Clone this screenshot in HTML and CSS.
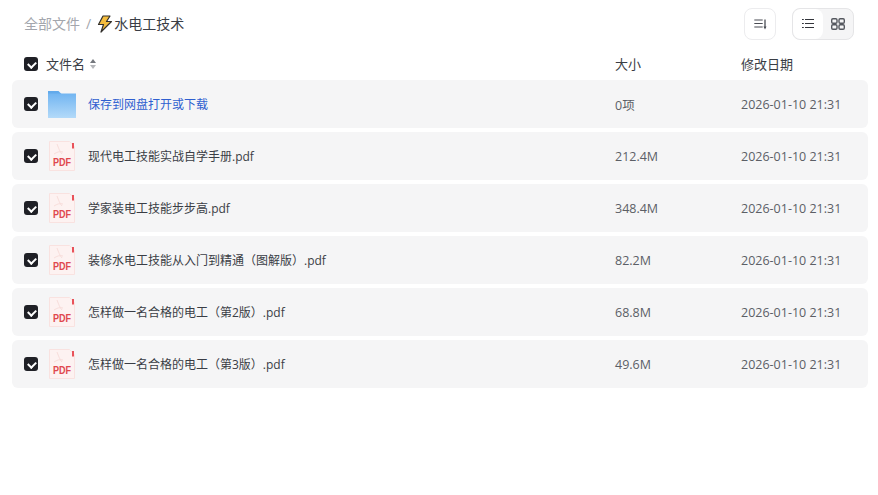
FILE: index.html
```html
<!DOCTYPE html>
<html lang="zh-CN">
<head>
  <meta charset="UTF-8">
  <title>水电工技术</title>
  <link rel="stylesheet" href="styles.css">
</head>
<body>
  <svg class="defs" width="0" height="0">
    <symbol id="pdf" viewBox="0 0 26 32">
      <path d="M.5 1.500h20l5 5v24H.5z" fill="#fdf2f1" stroke="#f9e2e0"/>
      <path d="M23 3h2v5.500h-2z" fill="#e8525a"/>
      <path d="M8 4c1.500 4 3 8 5 10M5 14c3-2 6-3 9-2" fill="none" stroke="#f8dedb"/>
    </symbol>
  </svg>
  <header class="topbar">
    <nav class="crumbs">
      <span class="crumb-root">全部文件</span>
      <span class="crumb-sep">/</span>
      <svg class="bolt" width="18" height="18" viewBox="0 0 18 18">
        <path d="M7 1h7l-3.500 5.500h5L5 17l2.500-7.500h-5z" fill="#f5bd3d" stroke="#33302c" stroke-width="1.200" stroke-linejoin="round"/>
      </svg>
      <span class="crumb-current">水电工技术</span>
    </nav>
    <div class="tools">
      <button class="tool-btn">
        <svg width="16" height="16" viewBox="0 0 16 16" fill="none" stroke="#4a4d54" stroke-width="1.100">
          <path d="M2.300 4h8.400M2.300 7.500h8.400M2.300 11h8.400"/>
          <path d="M13 3.500v8.500" stroke-width="1.300"/>
          <path d="M11.500 10.500h3L13 13.500z" fill="#4a4d54" stroke="none"/>
        </svg>
      </button>
      <div class="view-switch">
        <button class="view-btn active">
          <svg width="16" height="16" viewBox="0 0 16 16" fill="none" stroke="#33353b" stroke-width="1.100">
            <path d="M5 3.500h9M5 7.500h9M5 11.500h9M2 3.500h1.800M2 7.500h1.800M2 11.500h1.800"/>
          </svg>
        </button>
        <button class="view-btn">
          <svg width="16" height="16" viewBox="0 0 16 16" fill="none" stroke="#55585f" stroke-width="1.400">
            <rect x="1.700" y="2.700" width="5.300" height="4.600" rx="1.200"/>
            <rect x="9" y="2.700" width="5.300" height="4.600" rx="1.200"/>
            <rect x="1.700" y="8.700" width="5.300" height="4.600" rx="1.200"/>
            <rect x="9" y="8.700" width="5.300" height="4.600" rx="1.200"/>
          </svg>
        </button>
      </div>
    </div>
  </header>

  <div class="table-head">
    <span class="check"></span>
    <span class="head-name">文件名<i class="sort-arrows"></i></span>
    <span class="col-size">大小</span>
    <span class="col-date">修改日期</span>
  </div>

  <main class="rows">
    <div class="row">
      <span class="check"></span>
      <svg class="file-icon" width="32" height="32" viewBox="0 0 32 32">
        <defs>
          <linearGradient id="folder" x1="0" y1="0" x2="0" y2="1">
            <stop offset="0" stop-color="#72b5f1"/>
            <stop offset="1" stop-color="#b3daf9"/>
          </linearGradient>
        </defs>
        <path d="M2 3h10.500l3 3H2z" fill="#62aaeb"/>
        <path d="M2 5.500h28V30H2z" fill="url(#folder)"/>
      </svg>
      <span class="name link">保存到网盘打开或下载</span>
      <span class="col-size num">0项</span>
      <span class="col-date num">2026-01-10 21:31</span>
    </div>
    <div class="row">
      <span class="check"></span>
      <span class="pdf-icon"><svg width="26" height="32"><use href="#pdf"/></svg><b>PDF</b></span>
      <span class="name">现代电工技能实战自学手册.pdf</span>
      <span class="col-size num">212.4M</span>
      <span class="col-date num">2026-01-10 21:31</span>
    </div>
    <div class="row">
      <span class="check"></span>
      <span class="pdf-icon"><svg width="26" height="32"><use href="#pdf"/></svg><b>PDF</b></span>
      <span class="name">学家装电工技能步步高.pdf</span>
      <span class="col-size num">348.4M</span>
      <span class="col-date num">2026-01-10 21:31</span>
    </div>
    <div class="row">
      <span class="check"></span>
      <span class="pdf-icon"><svg width="26" height="32"><use href="#pdf"/></svg><b>PDF</b></span>
      <span class="name">装修水电工技能从入门到精通（图解版）.pdf</span>
      <span class="col-size num">82.2M</span>
      <span class="col-date num">2026-01-10 21:31</span>
    </div>
    <div class="row">
      <span class="check"></span>
      <span class="pdf-icon"><svg width="26" height="32"><use href="#pdf"/></svg><b>PDF</b></span>
      <span class="name">怎样做一名合格的电工（第2版）.pdf</span>
      <span class="col-size num">68.8M</span>
      <span class="col-date num">2026-01-10 21:31</span>
    </div>
    <div class="row">
      <span class="check"></span>
      <span class="pdf-icon"><svg width="26" height="32"><use href="#pdf"/></svg><b>PDF</b></span>
      <span class="name">怎样做一名合格的电工（第3版）.pdf</span>
      <span class="col-size num">49.6M</span>
      <span class="col-date num">2026-01-10 21:31</span>
    </div>
  </main>
</body>
</html>
```

FILE: styles.css
```css
* {
  box-sizing: border-box;
}
body {
  margin: 0;
  padding: 8px 10px 0 12px;
  background: #fff;
  color: #3a3d45;
  font-family: "Open Sans", "Noto Sans CJK SC", sans-serif;
  font-size: 13px;
}
.defs {
  position: absolute;
}
.topbar {
  display: flex;
  justify-content: space-between;
  align-items: center;
  height: 32px;
  padding: 0 14px 0 12px;
}
.crumbs {
  display: flex;
  align-items: center;
  font-size: 14px;
}
.crumb-root,
.crumb-sep,
.crumb-current {
  padding-bottom: 2px;
}
.crumb-root {
  color: #a3a6ad;
}
.crumb-sep {
  margin: 0 5px 0 6px;
  color: #a3a6ad;
}
.bolt {
  display: block;
}
.crumb-current {
  color: #3a3d45;
}
.tools {
  display: flex;
  gap: 16px;
}
.tool-btn {
  display: flex;
  align-items: center;
  justify-content: center;
  width: 32px;
  height: 32px;
  padding: 0;
  background: #fff;
  border: 1px solid #ececee;
  border-radius: 8px;
}
.view-switch {
  display: flex;
  width: 62px;
  height: 32px;
  background: #f5f5f6;
  border: 1px solid #e5e5e7;
  border-radius: 8px;
  overflow: hidden;
}
.view-btn {
  display: flex;
  align-items: center;
  justify-content: center;
  flex: 1;
  padding: 0;
  background: transparent;
  border: 0;
}
.view-btn.active {
  background: #fff;
  border-radius: 8px;
}
.check {
  position: relative;
  flex: none;
  width: 14px;
  height: 14px;
  margin-right: 8px;
  background: #1f2026;
  border-radius: 3px;
}
.check::after {
  content: "";
  position: absolute;
  left: 5px;
  top: 3px;
  width: 4px;
  height: 6px;
  border: solid #fff;
  border-width: 0 2px 2px 0;
  transform: rotate(45deg);
}
.table-head {
  display: flex;
  align-items: center;
  height: 40px;
  padding: 8px 0 0 12px;
}
.table-head .col-size,
.table-head .col-date {
  padding-bottom: 2px;
}
.head-name {
  display: flex;
  align-items: center;
  width: 569px;
  line-height: 16px;
}
.sort-arrows {
  position: relative;
  width: 6px;
  height: 10px;
  margin-left: 5px;
}
.sort-arrows::before,
.sort-arrows::after {
  content: "";
  position: absolute;
  left: 0;
  border-left: 3px solid transparent;
  border-right: 3px solid transparent;
}
.sort-arrows::before {
  top: 0;
  border-bottom: 4.500px solid #74777d;
}
.sort-arrows::after {
  bottom: 0;
  border-top: 4.500px solid #b4b6ba;
}
.col-size {
  flex: none;
  width: 126px;
}
.col-date {
  flex: none;
}
.num {
  color: #5c5f66;
  font-size: 12.500px;
}
.rows {
  display: flex;
  flex-direction: column;
  gap: 4px;
}
.row {
  display: flex;
  align-items: center;
  height: 48px;
  padding-left: 12px;
  background: #f5f5f6;
  border-radius: 6px;
}
.file-icon {
  flex: none;
  display: block;
  margin-right: 10px;
}
.pdf-icon {
  position: relative;
  flex: none;
  width: 32px;
  height: 32px;
  margin-right: 10px;
  padding-left: 3px;
}
.pdf-icon svg {
  display: block;
}
.pdf-icon b {
  position: absolute;
  left: 6.500px;
  bottom: 4px;
  color: #e0474d;
  font-family: "Liberation Sans", sans-serif;
  font-size: 11px;
  line-height: 11px;
  font-weight: 700;
  transform: scaleX(0.82);
  transform-origin: left center;
}
.name {
  flex: none;
  width: 527px;
  font-size: 12px;
}
.name.link {
  color: #2f5fd0;
}
```
